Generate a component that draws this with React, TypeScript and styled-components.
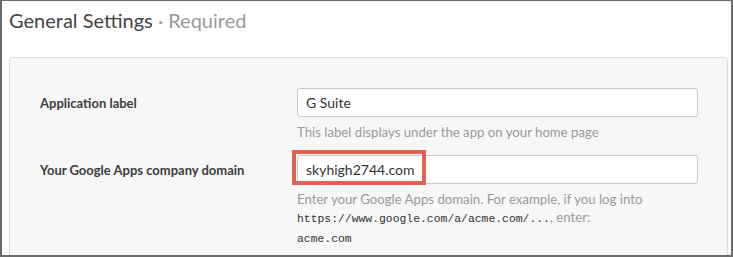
import styled, { createGlobalStyle } from 'styled-components'

const GlobalStyle = createGlobalStyle`
  html, body {
    margin: 0;
    padding: 0;
    background: #fff;
  }
  body {
    font-family: Lato, "Open Sans", Arial, sans-serif;
  }
`

export default function App() {
  return (
    <>
      <GlobalStyle />
      <Frame>
        <Heading>
          General Settings <Muted>· Required</Muted>
        </Heading>
        <Panel>
          <FieldRow>
            <FieldLabel>Application label</FieldLabel>
            <FieldBody>
              <TextInput defaultValue="G Suite" />
              <Help>This label displays under the app on your home page</Help>
            </FieldBody>
          </FieldRow>
          <FieldRow>
            <FieldLabel>Your Google Apps company domain</FieldLabel>
            <FieldBody>
              <InputWrap>
                <TextInput defaultValue="skyhigh2744.com" />
                <Highlight />
              </InputWrap>
              <Help>
                Enter your Google Apps domain. For example, if you log into
                <br />
                <Code>https://www.google.com/a/acme.com/...</Code>, enter:
                <br />
                <Code>acme.com</Code>
              </Help>
            </FieldBody>
          </FieldRow>
        </Panel>
      </Frame>
    </>
  )
}

const Frame = styled.div`
  width: 733px;
  height: 257px;
  box-sizing: border-box;
  border: 2px solid #6b6b6b;
  border-top-width: 1px;
  padding: 0 3px 0 7px;
  overflow: hidden;
`

const Heading = styled.h1`
  margin: 0;
  height: 56px;
  line-height: 38px;
  font-size: 20px;
  font-weight: 400;
  color: #454545;
`

const Muted = styled.span`
  color: #9a9a9a;
`

const Panel = styled.div`
  background: #f7f7f7;
  border: 1px solid #dcdcdc;
  border-radius: 4px;
  padding: 30px 30px 20px 30px;
  min-height: 260px;
`

const FieldRow = styled.div`
  display: grid;
  grid-template-columns: 257px 401px;
  margin-bottom: 13px;
`

const FieldLabel = styled.div`
  font-size: 13px;
  font-weight: 700;
  color: #3d3d3d;
  padding-top: 7px;
  line-height: 16px;
`

const FieldBody = styled.div`
  display: flex;
  flex-direction: column;
`

const InputWrap = styled.div`
  position: relative;
`

const TextInput = styled.input`
  box-sizing: border-box;
  width: 401px;
  height: 29px;
  border: 1px solid #c8c8c8;
  border-radius: 3px;
  background: #fff;
  padding: 0 8px;
  font-family: Lato, "Open Sans", Arial, sans-serif;
  font-size: 14px;
  color: #333;
  outline: none;
`

const Highlight = styled.div`
  position: absolute;
  left: -5px;
  top: -5px;
  width: 134px;
  height: 35px;
  box-sizing: border-box;
  border: 4px solid #e2604f;
  pointer-events: none;
`

const Help = styled.div`
  margin-top: 6px;
  font-size: 13.2px;
  line-height: 18.5px;
  color: #9a9a9a;
`

const Code = styled.code`
  font-family: "Liberation Mono", "DejaVu Sans Mono", monospace;
  font-size: 11.4px;
  line-height: 18px;
  color: #333;
`
